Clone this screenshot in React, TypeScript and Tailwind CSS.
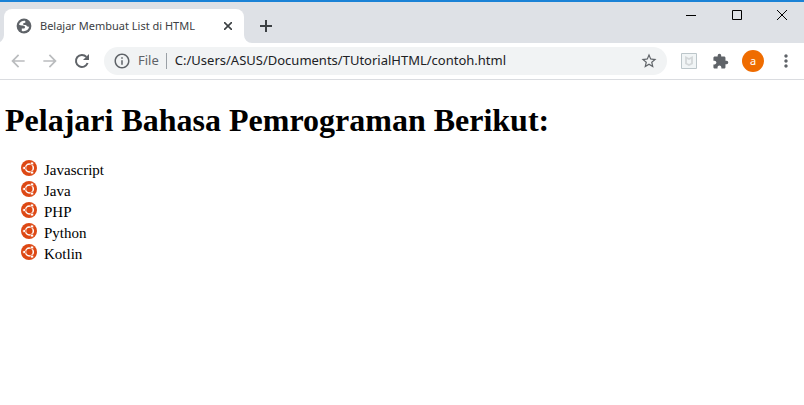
import { MdArrowBack, MdArrowForward, MdOutlineInfo, MdStarBorder, MdExtension, MdMoreVert } from 'react-icons/md';

const languages = ['Javascript', 'Java', 'PHP', 'Python', 'Kotlin'];

function UbuntuIcon() {
  return (
    <svg viewBox="0 0 16 16" className="size-4 shrink-0" aria-hidden="true">
      <circle cx="8" cy="8" r="8" fill="#dd4814" />
      <circle cx="8.4" cy="8" r="3.9" fill="none" stroke="#fff" strokeWidth="1.5" />
      <g fill="#fff" stroke="#dd4814" strokeWidth="0.7">
        <circle cx="3.2" cy="8" r="1.6" />
        <circle cx="11" cy="3.4" r="1.6" />
        <circle cx="11" cy="12.6" r="1.6" />
      </g>
    </svg>
  );
}

function GlobeIcon() {
  return (
    <svg viewBox="0 0 16 16" className="size-4 shrink-0" aria-hidden="true">
      <circle cx="8" cy="8" r="7.4" fill="#5f6368" />
      <path
        d="M9 2.7C6.2 2.4 3.8 4 2.9 6.4c1.2.9 2.3 1.1 3.7 1 1.6 0 2.4.7 2.4 1.8 0 .8-.6 1.3-1.6 1.3H5.8v2.4c3.2 1.1 6.9-.7 7.4-4.3-.8.3-1.6.2-2.2-.3-.6-.5-.5-1.1-1.3-1.2H7.9c-.9-.3-1-1.5-.2-2 .8-.5 1.7-.3 1.8-1.2z"
        fill="#fff"
      />
    </svg>
  );
}

function TabStrip() {
  return (
    <header className="flex h-[43px] items-start border-t-2 border-[#1a82d6] bg-[#dee1e6] pl-1">
      <div className="relative mt-[7px] flex h-[34px] w-60 items-center rounded-t-lg bg-white pr-2 pl-3">
        <svg viewBox="0 0 8 8" className="absolute bottom-0 -left-2 size-2 fill-white" aria-hidden="true">
          <path d="M8 0v8H0a8 8 0 0 0 8-8z" />
        </svg>
        <svg viewBox="0 0 8 8" className="absolute -right-2 bottom-0 size-2 fill-white" aria-hidden="true">
          <path d="M0 0v8h8a8 8 0 0 1-8-8z" />
        </svg>
        <GlobeIcon />
        <span className="ml-2 flex-1 whitespace-nowrap text-[11px] text-[#3c4043]">Belajar Membuat List di HTML</span>
        <button aria-label="Close tab" className="grid size-4 place-items-center">
          <svg viewBox="0 0 8 8" className="size-2 stroke-[#3c4043]" strokeWidth="1.6" aria-hidden="true">
            <path d="M0 0l8 8M8 0l-8 8" />
          </svg>
        </button>
      </div>
      <button aria-label="New tab" className="mt-[10px] ml-2 grid size-7 place-items-center">
        <svg viewBox="0 0 12 12" className="size-3 stroke-[#3c4043]" strokeWidth="2" aria-hidden="true">
          <path d="M6 0v12M0 6h12" />
        </svg>
      </button>
      <div className="ml-auto flex">
        <button aria-label="Minimize" className="grid h-[26px] w-[46px] place-items-center">
          <svg viewBox="0 0 10 10" className="size-[10px] fill-black" aria-hidden="true">
            <path d="M0 5h10v1H0z" />
          </svg>
        </button>
        <button aria-label="Maximize" className="grid h-[26px] w-[46px] place-items-center">
          <svg viewBox="0 0 10 10" className="size-[10px] fill-none stroke-black" aria-hidden="true">
            <path d="M.5.5h9v9h-9z" />
          </svg>
        </button>
        <button aria-label="Close" className="grid h-[26px] w-11 place-items-center">
          <svg viewBox="0 0 10 10" className="size-[10px] stroke-black" aria-hidden="true">
            <path d="M0 0l10 10M10 0L0 10" />
          </svg>
        </button>
      </div>
    </header>
  );
}

function Toolbar() {
  return (
    <nav className="flex h-[37px] items-center border-b border-[#dadce0] bg-white px-2 text-[#5f6368]">
      <button aria-label="Back" className="text-[#babcbe]">
        <MdArrowBack className="size-5" />
      </button>
      <button aria-label="Forward" className="ml-3 text-[#babcbe]">
        <MdArrowForward className="size-5" />
      </button>
      <button aria-label="Reload" className="ml-3">
        <svg viewBox="0 0 20 20" className="size-5" aria-hidden="true">
          <path d="M15.6 12A6 6 0 1 1 14.4 5.9" fill="none" stroke="currentColor" strokeWidth="2" />
          <path d="M17 3v6h-6z" fill="currentColor" />
        </svg>
      </button>
      <div className="ml-3 flex h-7 flex-1 items-center rounded-full bg-[#f1f3f4] px-[9px]">
        <button className="flex items-center text-[13px]">
          <MdOutlineInfo className="mr-[7px] size-[18px]" />
          File
        </button>
        <span className="mr-2 ml-[7px] h-4 w-px bg-[#9aa0a6]" />
        <input
          aria-label="Address"
          defaultValue="C:/Users/ASUS/Documents/TUtorialHTML/contoh.html"
          className="min-w-0 flex-1 bg-transparent text-[13px] text-[#202124] outline-none"
        />
        <button aria-label="Bookmark this page">
          <MdStarBorder className="size-[18px]" />
        </button>
      </div>
      <button aria-label="McAfee" className="ml-[14px]">
        <svg viewBox="0 0 16 16" className="size-4" aria-hidden="true">
          <path d="M.5.5h15v15H.5z" fill="#f1f5f6" stroke="#bcc6ca" />
          <path d="M5 4.5v6l3 1.5 3-1.5v-6L8 6z" fill="none" stroke="#d3d7d9" strokeWidth="1.8" />
        </svg>
      </button>
      <button aria-label="Extensions" className="ml-[15px]">
        <MdExtension className="size-[17px]" />
      </button>
      <button aria-label="Profile" className="ml-[13px] size-[22px] rounded-full bg-[#ef6c00] text-[11px] leading-5 text-white">
        a
      </button>
      <button aria-label="Menu" className="ml-3">
        <MdMoreVert className="size-5" />
      </button>
    </nav>
  );
}

export default function App() {
  return (
    <div className="min-h-screen bg-white font-['Noto_Sans',sans-serif]">
      <TabStrip />
      <Toolbar />
      <main className="px-[5px] pt-5 font-['Liberation_Serif',serif] text-black">
        <h1 className="text-[32px] leading-10 font-bold">Pelajari Bahasa Pemrograman Berikut:</h1>
        <ul className="mt-5 pl-4 text-[15px] leading-[21px]">
          {languages.map((name) => (
            <li key={name} className="flex gap-[7px]">
              <UbuntuIcon />
              {name}
            </li>
          ))}
        </ul>
      </main>
    </div>
  );
}
